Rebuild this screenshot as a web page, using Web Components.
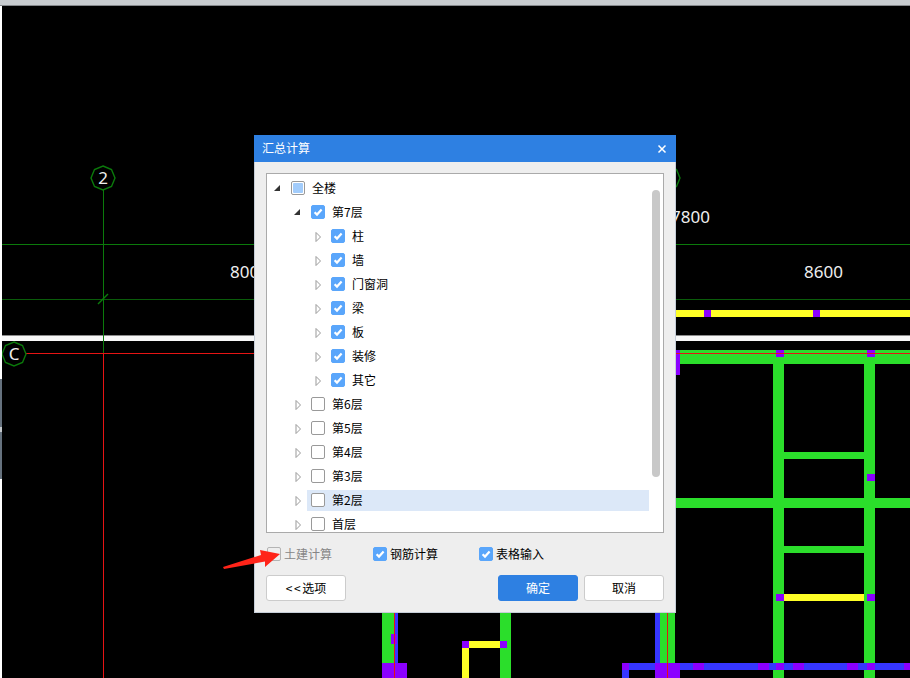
<!DOCTYPE html>
<html>
<head>
<meta charset="utf-8">
<title>汇总计算</title>
<style>
  html, body { margin: 0; padding: 0; background: #fff; }
  body { font-family: "Noto Sans CJK SC", "Noto Sans", sans-serif; font-size: 12px; }
</style>
</head>
<body>
<app-screen>
  <cad-view></cad-view>
  <summary-dialog>
    <span slot="title">汇总计算</span>
    <tree-row slot="tree" level="0" toggle="open" state="partial">全楼</tree-row>
    <tree-row slot="tree" level="1" toggle="open" state="checked">第7层</tree-row>
    <tree-row slot="tree" level="2" toggle="closed" state="checked">柱</tree-row>
    <tree-row slot="tree" level="2" toggle="closed" state="checked">墙</tree-row>
    <tree-row slot="tree" level="2" toggle="closed" state="checked">门窗洞</tree-row>
    <tree-row slot="tree" level="2" toggle="closed" state="checked">梁</tree-row>
    <tree-row slot="tree" level="2" toggle="closed" state="checked">板</tree-row>
    <tree-row slot="tree" level="2" toggle="closed" state="checked">装修</tree-row>
    <tree-row slot="tree" level="2" toggle="closed" state="checked">其它</tree-row>
    <tree-row slot="tree" level="1" toggle="closed">第6层</tree-row>
    <tree-row slot="tree" level="1" toggle="closed">第5层</tree-row>
    <tree-row slot="tree" level="1" toggle="closed">第4层</tree-row>
    <tree-row slot="tree" level="1" toggle="closed">第3层</tree-row>
    <tree-row slot="tree" level="1" toggle="closed" selected>第2层</tree-row>
    <tree-row slot="tree" level="1" toggle="closed">首层</tree-row>

    <option-check slot="options" disabled>土建计算</option-check>
    <option-check slot="options" state="checked">钢筋计算</option-check>
    <option-check slot="options" state="checked">表格输入</option-check>

    <dialog-button slot="left-actions"><span style="letter-spacing: 1.5px">&lt;&lt;</span>选项</dialog-button>
    <dialog-button slot="right-actions" primary>确定</dialog-button>
    <dialog-button slot="right-actions">取消</dialog-button>
  </summary-dialog>
</app-screen>

<script>
// colours of the drawing layers
const GREEN = "#2bde2b";
const YELLOW = "#ffff26";
const PURPLE = "#8b00ff";
const BLUE = "#3636ff";
const RED = "#e61414";
const AXIS = "#0b7a0b";

// [x, y, w, h, fill], painted in this order
const cadRects = [
  [676, 310, 234, 7, YELLOW],
  [704, 310, 7, 7, PURPLE],
  [813, 310, 7, 7, PURPLE],
  [2, 335, 908, 1, "#8c8c8c"],
  [2, 336, 908, 5, "#f8f8f8"],

  [773, 354, 11, 324, GREEN],
  [864, 354, 11, 324, GREEN],
  [676, 350, 234, 14, GREEN],
  [676, 498, 234, 10, GREEN],
  [784, 452, 80, 7, GREEN],
  [784, 546, 80, 7, GREEN],
  [784, 594, 80, 7, YELLOW],

  [776, 350, 8, 7, PURPLE],
  [867, 350, 8, 7, PURPLE],
  [676, 350, 4, 25, PURPLE],
  [867, 474, 8, 7, PURPLE],
  [776, 594, 8, 7, PURPLE],
  [867, 594, 8, 7, PURPLE],

  [622, 663, 288, 7, BLUE],
  [622, 670, 7, 8, BLUE],
  [655, 612, 5, 51, BLUE],
  [660, 612, 15, 51, GREEN],
  [655, 663, 25, 15, PURPLE],
  [622, 663, 7, 7, PURPLE],
  [693, 663, 11, 7, PURPLE],
  [758, 663, 11, 7, PURPLE],
  [776, 663, 8, 7, PURPLE],
  [793, 663, 11, 7, PURPLE],
  [847, 663, 11, 7, PURPLE],
  [867, 663, 8, 7, PURPLE],
  [904, 663, 6, 7, PURPLE],

  [382, 612, 12, 51, GREEN],
  [395, 612, 3, 51, BLUE],
  [391, 634, 6, 10, PURPLE],
  [382, 663, 25, 15, PURPLE],

  [500, 612, 11, 66, GREEN],
  [462, 641, 38, 7, YELLOW],
  [462, 648, 7, 30, YELLOW],
  [462, 641, 7, 7, PURPLE],
  [500, 641, 7, 7, PURPLE],
];

// [x1, y1, x2, y2, stroke, width]
const cadLines = [
  [2, 244.5, 910, 244.5, AXIS, 1],
  [2, 299.5, 910, 299.5, "#0a5c0a", 1],
  [103.5, 190, 103.5, 353, AXIS, 1],
  [98, 304, 108, 294, AXIS, 1.4],
  [2, 353.5, 910, 353.5, RED, 1],
  [103.5, 353, 103.5, 678, RED, 1],
  [394.5, 612, 394.5, 678, RED, 1],
  [667.5, 612, 667.5, 678, RED, 1],
];

// grid bubble: axis label in a green octagon-like ring
function bubble(cx, cy, label) {
  const points = [];
  for (let i = 0; i < 8; i++) {
    const a = (Math.PI * 2 * i) / 8 - Math.PI / 2;
    points.push((cx + 12 * Math.cos(a)).toFixed(1) + "," + (cy + 12 * Math.sin(a)).toFixed(1));
  }
  return `<polygon points="${points.join(" ")}" fill="#000" stroke="${AXIS}" stroke-width="1.4"/>
    <text x="${cx}" y="${cy + 6}" text-anchor="middle" font-size="17">${label}</text>`;
}

class AppScreen extends HTMLElement {
  constructor() {
    super();
    const root = this.attachShadow({ mode: "open" });
    root.innerHTML = `
      <style>
        :host {
          display: flex;
          flex-direction: column;
          position: relative;
          width: 910px;
          height: 678px;
          overflow: hidden;
          background: #fff;
        }
        #topbar {
          height: 5px;
          background: #c8ccd0;
          border-bottom: 1px solid #85888c;
          flex: none;
        }
        #work {
          display: flex;
          flex: 1;
          min-height: 0;
        }
        #edge {
          width: 2px;
          flex: none;
          padding-top: 373px;
        }
        #edge div {
          height: 100px;
          background: linear-gradient(#66727e 48%, #c4c8cc 48%, #c4c8cc 53%, #66727e 53%);
        }
        #arrow {
          position: absolute;
          left: 0;
          top: 0;
          pointer-events: none;
        }
      </style>
      <div id="topbar"></div>
      <div id="work">
        <div id="edge"><div></div></div>
        <slot></slot>
      </div>
      <svg id="arrow" width="910" height="678">
        <polygon points="223,567 261,555 260,550 280,554 265,567 265,561.5 224,569" fill="#ff2419"/>
      </svg>
    `;
  }
}

class CadView extends HTMLElement {
  constructor() {
    super();
    const root = this.attachShadow({ mode: "open" });
    const rects = cadRects
      .map((r) => `<rect x="${r[0]}" y="${r[1]}" width="${r[2]}" height="${r[3]}" fill="${r[4]}"/>`)
      .join("");
    const lines = cadLines
      .map((l) => `<line x1="${l[0]}" y1="${l[1]}" x2="${l[2]}" y2="${l[3]}" stroke="${l[4]}" stroke-width="${l[5]}"/>`)
      .join("");
    root.innerHTML = `
      <style>
        :host { display: block; flex: 1; background: #000; }
        svg { display: block; }
        text { fill: #eee; font-family: "Noto Sans", sans-serif; }
      </style>
      <svg width="908" height="672" viewBox="2 6 908 672">
        ${rects}
        ${lines}
        ${bubble(103, 178, "2")}
        ${bubble(14, 354, "C")}
        ${bubble(668, 178, "")}
        <text x="230" y="278" font-size="17">8000</text>
        <text x="671" y="223" font-size="17">7800</text>
        <text x="804" y="278" font-size="17">8600</text>
      </svg>
    `;
  }
}

class CheckMark extends HTMLElement {
  constructor() {
    super();
    const root = this.attachShadow({ mode: "open" });
    root.innerHTML = `
      <style>
        :host {
          display: block;
          flex: none;
          box-sizing: border-box;
          width: 14px;
          height: 14px;
          border: 1px solid #999;
          border-radius: 2px;
          background: #fff;
        }
        :host([state="checked"]) { background: #5aa6fb; border-color: #5aa6fb; }
        :host([state="partial"]) { padding: 1px; }
        :host([disabled]) { background: transparent; border-color: #b4b4b4; }
        #fill { display: none; width: 100%; height: 100%; background: #a2ccfb; border-radius: 1px; }
        :host([state="partial"]) #fill { display: block; }
        svg { display: none; width: 12px; height: 12px; }
        :host([state="checked"]) svg { display: block; }
      </style>
      <div id="fill"></div>
      <svg viewBox="0 0 12 12"><path d="M2.6 6.2 L5 8.6 L9.6 3.6" fill="none" stroke="#fff" stroke-width="2.2"/></svg>
    `;
  }
}

class TreeRow extends HTMLElement {
  constructor() {
    super();
    const root = this.attachShadow({ mode: "open" });
    const level = Number(this.getAttribute("level") || 0);
    const open = this.getAttribute("toggle") === "open";
    const state = this.getAttribute("state") || "none";
    root.innerHTML = `
      <style>
        :host {
          display: flex;
          align-items: center;
          height: 24px;
          padding-left: ${level * 20}px;
          color: #000;
        }
        #toggle { width: 20px; height: 24px; flex: none; display: block; }
        #item {
          display: flex;
          align-items: center;
          gap: 7px;
          flex: 1;
          height: 21px;
          padding-left: 4px;
          margin-right: 14px;
        }
        #item span { padding-bottom: 2px; }
        :host([selected]) #item { background: #dce8f8; }
      </style>
      <svg id="toggle" viewBox="0 0 20 24">
        ${open
          ? '<polygon points="13,9 13,15 7,15" fill="#333"/>'
          : '<polygon points="9,8.5 13.5,13 9,17.5" fill="none" stroke="#999"/>'}
      </svg>
      <div id="item">
        <check-mark state="${state}"></check-mark>
        <span><slot></slot></span>
      </div>
    `;
  }
}

class OptionCheck extends HTMLElement {
  constructor() {
    super();
    const root = this.attachShadow({ mode: "open" });
    const state = this.getAttribute("state") || "none";
    const disabled = this.hasAttribute("disabled") ? "disabled" : "";
    root.innerHTML = `
      <style>
        :host {
          display: flex;
          align-items: center;
          gap: 3px;
          width: 106px;
          height: 16px;
          color: #000;
        }
        :host([disabled]) { color: #868686; }
        span { padding-bottom: 2px; }
      </style>
      <check-mark state="${state}" ${disabled}></check-mark>
      <span><slot></slot></span>
    `;
  }
}

class DialogButton extends HTMLElement {
  constructor() {
    super();
    const root = this.attachShadow({ mode: "open" });
    root.innerHTML = `
      <style>
        :host {
          display: flex;
          align-items: center;
          justify-content: center;
          box-sizing: border-box;
          width: 80px;
          height: 26px;
          background: #fff;
          border: 1px solid #ccc;
          border-radius: 3px;
          color: #000;
        }
        :host([primary]) { background: #2e80e2; border-color: #2e80e2; color: #fff; }
        span { padding-bottom: 2px; }
      </style>
      <span><slot></slot></span>
    `;
  }
}

class SummaryDialog extends HTMLElement {
  constructor() {
    super();
    const root = this.attachShadow({ mode: "open" });
    root.innerHTML = `
      <style>
        :host {
          display: flex;
          flex-direction: column;
          position: absolute;
          left: 254px;
          top: 135px;
          width: 422px;
          height: 478px;
          box-sizing: border-box;
          background: #eeeeee;
          border: 1px solid #c6ced8;
          border-top: 0;
        }
        #title {
          display: flex;
          align-items: center;
          justify-content: space-between;
          height: 27px;
          margin: 0 -1px;
          padding: 0 9px 0 8px;
          background: #2e80e2;
          color: #fff;
        }
        #label { padding-bottom: 2px; }
        #title svg { display: block; }
        #body {
          display: flex;
          flex-direction: column;
          padding: 11px 11px 0;
        }
        #tree {
          position: relative;
          height: 360px;
          box-sizing: border-box;
          background: #fff;
          border: 1px solid #aaa;
          padding-top: 2px;
          overflow: hidden;
        }
        #thumb {
          position: absolute;
          right: 3px;
          top: 16px;
          width: 8px;
          height: 287px;
          border-radius: 4px;
          background: #c8c8c8;
        }
        #options {
          display: flex;
          padding: 13px 0 0 1px;
        }
        #actions {
          display: flex;
          justify-content: space-between;
          padding-top: 13px;
        }
        #right { display: flex; gap: 6px; }
      </style>
      <div id="title">
        <span id="label"><slot name="title"></slot></span>
        <svg width="10" height="10" viewBox="0 0 10 10">
          <path d="M1.5 1.5 L8.5 8.5 M8.5 1.5 L1.5 8.5" stroke="#fff" stroke-width="1.5"/>
        </svg>
      </div>
      <div id="body">
        <div id="tree">
          <slot name="tree"></slot>
          <div id="thumb"></div>
        </div>
        <div id="options"><slot name="options"></slot></div>
        <div id="actions">
          <div><slot name="left-actions"></slot></div>
          <div id="right"><slot name="right-actions"></slot></div>
        </div>
      </div>
    `;
  }
}

window.customElements.define("check-mark", CheckMark);
window.customElements.define("tree-row", TreeRow);
window.customElements.define("option-check", OptionCheck);
window.customElements.define("dialog-button", DialogButton);
window.customElements.define("summary-dialog", SummaryDialog);
window.customElements.define("cad-view", CadView);
window.customElements.define("app-screen", AppScreen);
</script>
</body>
</html>
